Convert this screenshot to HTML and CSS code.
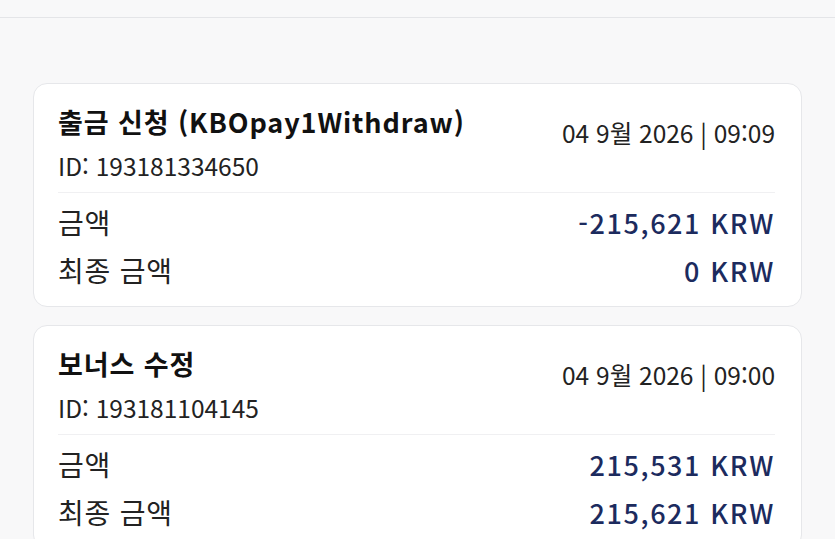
FILE: index.html
```html
<!DOCTYPE html>
<html lang="ko">
<head>
<meta charset="utf-8">
<link rel="stylesheet" href="styles.css">
</head>
<body>
<div class="topbar"></div>
<main class="list">
  <section class="card">
    <div class="head">
      <div class="info">
        <div class="title">출금 신청 (KBOpay1Withdraw)</div>
        <div class="id">ID: 193181334650</div>
      </div>
      <div class="date">04 9월 2026 | 09:09</div>
    </div>
    <div class="rows">
      <div class="row"><span class="label">금액</span><span class="value">-215,621 KRW</span></div>
      <div class="row"><span class="label">최종 금액</span><span class="value">0 KRW</span></div>
    </div>
  </section>
  <section class="card">
    <div class="head">
      <div class="info">
        <div class="title">보너스 수정</div>
        <div class="id">ID: 193181104145</div>
      </div>
      <div class="date">04 9월 2026 | 09:00</div>
    </div>
    <div class="rows">
      <div class="row"><span class="label">금액</span><span class="value">215,531 KRW</span></div>
      <div class="row"><span class="label">최종 금액</span><span class="value">215,621 KRW</span></div>
    </div>
  </section>
</main>
</body>
</html>
```
FILE: styles.css
```css
html, body {
  margin: 0;
  padding: 0;
  background: #f8f8f9;
  font-family: "Noto Sans CJK KR", "Noto Sans", sans-serif;
  color: #1a1a1a;
  overflow: hidden;
}
.topbar {
  height: 17px;
  border-bottom: 1px solid #e4e5e8;
  background: #f8f8f9;
}
.list {
  display: flex;
  flex-direction: column;
  gap: 18px;
  padding: 65px 33px 0 33px;
}
.card {
  background: #fff;
  border: 1px solid #e6e7ea;
  border-radius: 14px;
  padding: 18px 26px 12px 24px;
}
.head {
  display: flex;
  justify-content: space-between;
  align-items: flex-start;
  padding-bottom: 9px;
  border-bottom: 1px solid #f0f0f2;
}
.title {
  font-size: 27px;
  font-weight: 700;
  line-height: 40px;
  letter-spacing: 0.9px;
  color: #111;
}
.id {
  font-size: 24.5px;
  line-height: 34px;
  margin-top: 7px;
  color: #222;
}
.date {
  font-size: 24.5px;
  line-height: 34px;
  margin-top: 14px;
  color: #222;
}
.rows {
  display: flex;
  flex-direction: column;
  padding-top: 5px;
}
.row {
  display: flex;
  justify-content: space-between;
  align-items: center;
  height: 48px;
}
.label {
  font-size: 28px;
  letter-spacing: 0.8px;
  color: #222;
}
.value {
  font-size: 27px;
  font-weight: 500;
  letter-spacing: 1.6px;
  color: #1c2b5e;
}
```
